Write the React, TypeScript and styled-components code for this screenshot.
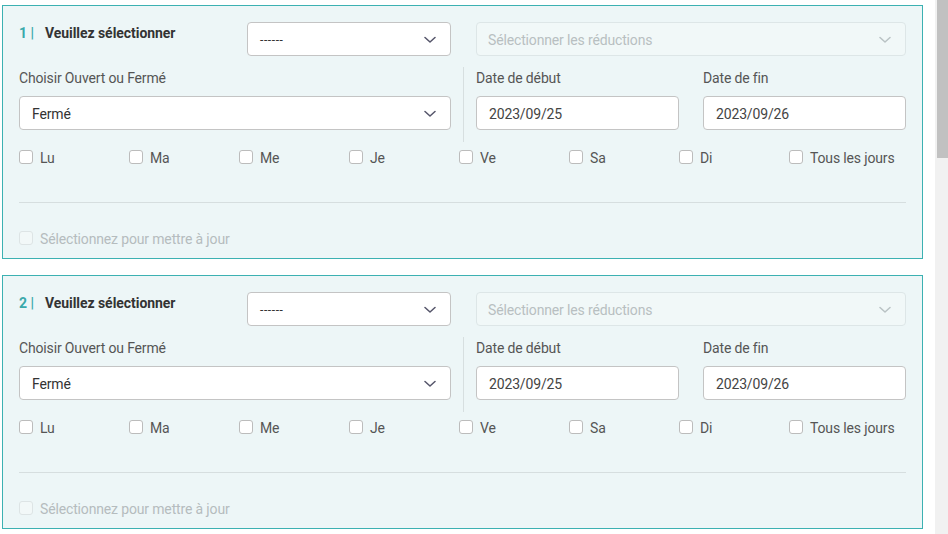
import styled, { createGlobalStyle } from 'styled-components';

const GlobalStyle = createGlobalStyle`
  html, body {
    margin: 0;
    padding: 0;
    background: #ffffff;
    overflow: hidden;
  }
  body {
    font-family: Roboto, "Liberation Sans", Arial, sans-serif;
    font-size: 14px;
    color: #333;
  }
`

const days = ['Lu', 'Ma', 'Me', 'Je', 'Ve', 'Sa', 'Di', 'Tous les jours'];

type Period = {
  id: number
  status: string
  start: string
  end: string
}

const periods: Period[] = [
  { id: 1, status: 'Fermé', start: '2023/09/25', end: '2023/09/26' },
  { id: 2, status: 'Fermé', start: '2023/09/25', end: '2023/09/26' },
];

const Chevron = ({ light }: { light?: boolean }) => (
  <svg width="12" height="8" viewBox="0 0 12 8" fill="none">
    <path
      d="M1 1.5 L6 6 L11 1.5"
      stroke={light ? '#b9c2c4' : '#55556a'}
      strokeWidth="1.5"
      strokeLinecap="round"
      strokeLinejoin="round"
    />
  </svg>
);

const PeriodCard = ({ period }: { period: Period }) => {
  return (
    <Card>
      <TopRow>
        <Heading>
          <Num>{period.id} |</Num>
          Veuillez sélectionner
        </Heading>
        <Select $width="204px">
          <Dashes>------</Dashes>
          <Chevron />
        </Select>
        <Select $disabled>
          <Placeholder>Sélectionner les réductions</Placeholder>
          <Chevron light />
        </Select>
      </TopRow>

      <FieldsRow>
        <Field>
          <Label>Choisir Ouvert ou Fermé</Label>
          <Select>
            <Value>{period.status}</Value>
            <Chevron />
          </Select>
        </Field>
        <Divider />
        <Dates>
          <Field>
            <Label>Date de début</Label>
            <Input>{period.start}</Input>
          </Field>
          <Field>
            <Label>Date de fin</Label>
            <Input>{period.end}</Input>
          </Field>
        </Dates>
      </FieldsRow>

      <DaysRow>
        {days.map((d) => (
          <Check key={d}>
            <Box />
            <CheckText>{d}</CheckText>
          </Check>
        ))}
      </DaysRow>

      <Rule />

      <Check $disabled>
        <Box $disabled />
        <CheckText>Sélectionnez pour mettre à jour</CheckText>
      </Check>
    </Card>
  );
}

export default function App() {
  return (
    <>
      <GlobalStyle />
      <Page>
        <Content>
          {periods.map((p) => (
            <PeriodCard key={p.id} period={p} />
          ))}
        </Content>
        <ScrollTrack>
          <Thumb />
        </ScrollTrack>
      </Page>
    </>
  );
}

const Page = styled.div`
  display: flex;
  width: 948px;
  height: 534px;
  overflow: hidden;
`
const Content = styled.div`
  flex: 1;
  padding: 5px 12px 0 2px;
  display: flex;
  flex-direction: column;
  gap: 16px;
`
const ScrollTrack = styled.div`
  width: 13px;
  background-color: #f1f1f1;
  display: flex;
  justify-content: flex-end;
`
const Thumb = styled.div`
  width: 11px;
  height: 158px;
  background-color: #c1c1c1;
`
const Card = styled.div`
  border: 1px solid #3cb1b2;
  background-color: #edf6f7;
  padding: 16px 16px 13px 16px;
`
const TopRow = styled.div`
  display: flex;
  align-items: flex-start;
  height: 34px;
`
const Heading = styled.div`
  width: 228px;
  padding-top: 1px;
  line-height: 20px;
  font-weight: 700;
  font-size: 14px;
  letter-spacing: -0.05px;
  color: #333;
`
const Num = styled.span`
  color: #3aa9ab;
  margin-right: 11px;
`
const Select = styled.div<{ $width?: string; $disabled?: boolean }>`
  box-sizing: border-box;
  height: 34px;
  width: ${(p) => p.$width || 'auto'};
  flex: ${(p) => (p.$width ? 'none' : '1')};
  margin-left: ${(p) => (p.$disabled ? '25px' : '0')};
  display: flex;
  align-items: center;
  justify-content: space-between;
  padding: 1px 14px 0 12px;
  background-color: ${(p) => (p.$disabled ? '#f1f8f8' : '#ffffff')};
  border: 1px solid ${(p) => (p.$disabled ? '#dde6e7' : '#c4c4c4')};
  border-radius: 4px;
`
const Dashes = styled.span`
  font-size: 12px;
  letter-spacing: 0.6px;
  color: #333;
`
const Placeholder = styled.span`
  color: #b8bfc1;
  font-size: 14px;
  letter-spacing: -0.15px;
  margin-left: -1px;
`
const Value = styled.span`
  color: #333;
  font-size: 14px;
  letter-spacing: -0.15px;
`
const FieldsRow = styled.div`
  display: grid;
  grid-template-columns: 432px 1fr 430px;
  margin-top: 11px;
  padding-bottom: 12px;
`
const Field = styled.div`
  display: flex;
  flex-direction: column;
  gap: 8px;
`
const Label = styled.div`
  padding-top: 1px;
  line-height: 20px;
  font-size: 14px;
  letter-spacing: -0.15px;
  color: #555;
`
const Divider = styled.div`
  justify-self: center;
  width: 1px;
  margin-bottom: -12px;
  background-color: #d7dfe0;
`
const Dates = styled.div`
  display: grid;
  grid-template-columns: 203px 203px;
  justify-content: space-between;
`
const Input = styled.div`
  box-sizing: border-box;
  height: 34px;
  display: flex;
  align-items: center;
  padding: 1px 12px 0;
  background-color: #ffffff;
  border: 1px solid #c4c4c4;
  border-radius: 4px;
  color: #444;
  font-size: 14px;
  letter-spacing: -0.15px;
`
const DaysRow = styled.div`
  display: grid;
  grid-template-columns: repeat(8, 110px);
  margin-top: 8px;
`
const Check = styled.label<{ $disabled?: boolean }>`
  display: flex;
  align-items: center;
  gap: 7px;
  height: 14px;
  font-size: 14px;
  color: ${(p) => (p.$disabled ? '#b5bcbe' : '#555')};
  white-space: nowrap;
`
const CheckText = styled.span`
  padding-top: 2px;
  letter-spacing: -0.15px;
`
const Box = styled.span<{ $disabled?: boolean }>`
  box-sizing: border-box;
  width: 14px;
  height: 14px;
  border-radius: 3px;
  border: 1px solid ${(p) => (p.$disabled ? '#dde4e5' : '#bcbcbc')};
  background-color: ${(p) => (p.$disabled ? '#f2f8f8' : '#ffffff')};
`
const Rule = styled.div`
  height: 1px;
  background-color: #d6dedf;
  margin: 38px 0 28px;
`
